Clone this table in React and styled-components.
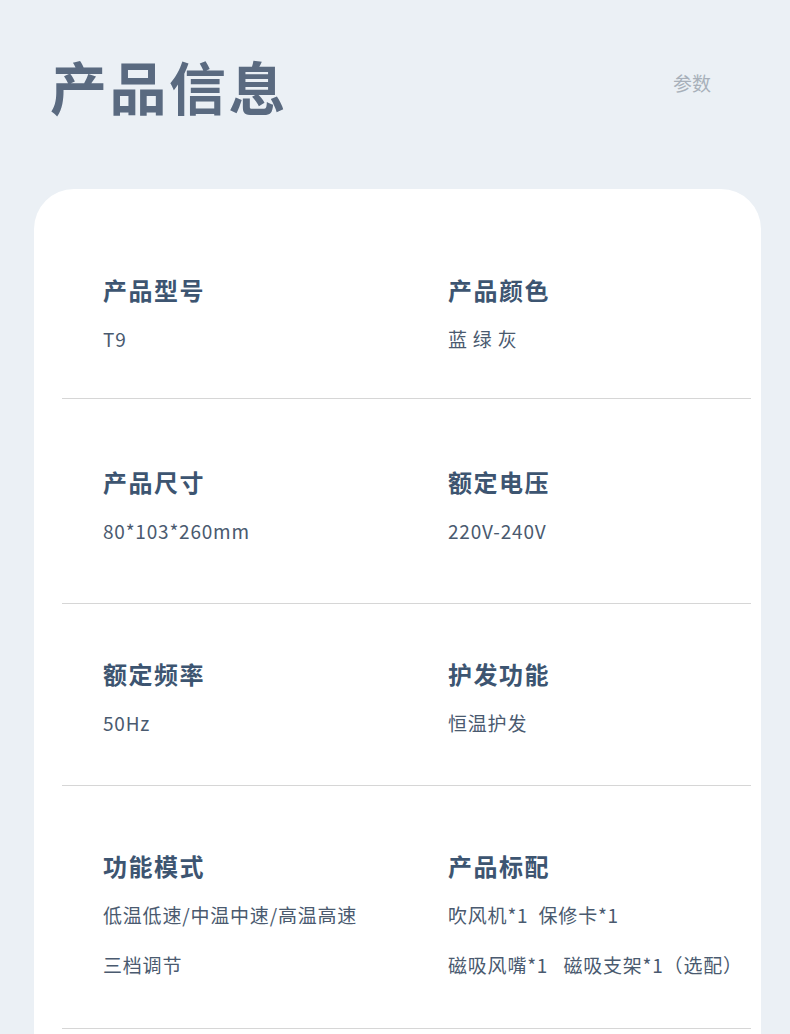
import React from "react";
import styled, { createGlobalStyle } from "styled-components";

const Global = createGlobalStyle`
  html, body { margin: 0; padding: 0; background: #ebf0f5; }
  body { font-family: "Noto Sans CJK SC", "Noto Sans", sans-serif; }
`;

const Page = styled.div`
  width: 790px;
  height: 1034px;
  overflow: hidden;
  background: #ebf0f5;
`;

const Header = styled.header`
  height: 189px;
  display: flex;
  align-items: flex-start;
  justify-content: space-between;
  padding: 0 79px 0 50px;
  box-sizing: border-box;
`;

const Title = styled.h1`
  margin: 55px 0 0;
  font-size: 57px;
  line-height: 60px;
  letter-spacing: 2.5px;
  font-weight: 700;
  color: #5a6a80;
`;

const Tag = styled.span`
  margin-top: 72px;
  font-size: 19px;
  line-height: 22px;
  color: #a8b0ba;
`;

const Card = styled.section`
  margin-left: 34px;
  width: 727px;
  min-height: 900px;
  background: #ffffff;
  border-radius: 40px 40px 0 0;
  padding: 0 10px 0 28px;
  box-sizing: border-box;
`;

const Row = styled.div`
  display: grid;
  grid-template-columns: 345px 1fr;
  padding: ${(p) => p.$pt}px 0 ${(p) => p.$pb}px 41px;
  border-bottom: 1px solid #d6d6d6;
`;

const Cell = styled.div`
  display: flex;
  flex-direction: column;
`;

const Label = styled.div`
  font-size: 24px;
  line-height: 24px;
  font-weight: 700;
  letter-spacing: 1.5px;
  color: #3d5571;
  margin-bottom: 28px;
`;

const Values = styled.div`
  display: flex;
  flex-direction: column;
  gap: 32px;
`;

const Value = styled.div`
  font-size: 19px;
  line-height: 18px;
  letter-spacing: 0.8px;
  color: #4a5a6f;
  white-space: pre;
`;

const rows = [
  {
    pt: 89,
    pb: 50,
    items: [
      { label: "产品型号", values: ["T9"] },
      { label: "产品颜色", values: ["蓝 绿 灰"] },
    ],
  },
  {
    pt: 71,
    pb: 63,
    items: [
      { label: "产品尺寸", values: ["80*103*260mm"] },
      { label: "额定电压", values: ["220V-240V"] },
    ],
  },
  {
    pt: 58,
    pb: 53,
    items: [
      { label: "额定频率", values: ["50Hz"] },
      { label: "护发功能", values: ["恒温护发"] },
    ],
  },
  {
    pt: 68,
    pb: 54,
    items: [
      { label: "功能模式", values: ["低温低速/中温中速/高温高速", "三档调节"] },
      { label: "产品标配", values: ["吹风机*1  保修卡*1", "磁吸风嘴*1   磁吸支架*1（选配）"] },
    ],
  },
];

export default function App() {
  return (
    <Page>
      <Global />
      <Header>
        <Title>产品信息</Title>
        <Tag>参数</Tag>
      </Header>
      <Card>
        {rows.map((r, i) => (
          <Row key={i} $pt={r.pt} $pb={r.pb}>
            {r.items.map((it) => (
              <Cell key={it.label}>
                <Label>{it.label}</Label>
                <Values>
                  {it.values.map((v) => (
                    <Value key={v}>{v}</Value>
                  ))}
                </Values>
              </Cell>
            ))}
          </Row>
        ))}
      </Card>
    </Page>
  );
}
